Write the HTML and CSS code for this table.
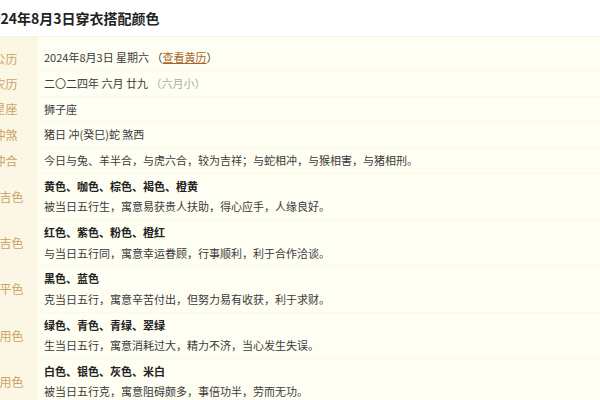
FILE: index.html
```html
<!DOCTYPE html>
<html lang="zh-CN">
<head>
  <meta charset="UTF-8">
  <title>2024年8月3日穿衣搭配颜色</title>
  <link rel="stylesheet" href="styles.css">
</head>
<body>
  <div class="page">

    <h1 class="title">2024年8月3日穿衣搭配颜色</h1>

    <div class="table">
      <div class="row">
        <div class="label">公历</div>
        <div class="value">2024年8月3日 星期六 （<a href="#">查看黄历</a>）</div>
      </div>
      <div class="row">
        <div class="label">农历</div>
        <div class="value">二〇二四年 六月 廿九 <span class="muted">（六月小）</span></div>
      </div>
      <div class="row">
        <div class="label">星座</div>
        <div class="value">狮子座</div>
      </div>
      <div class="row">
        <div class="label">冲煞</div>
        <div class="value">猪日 冲(癸巳)蛇 煞西</div>
      </div>
      <div class="row">
        <div class="label">冲合</div>
        <div class="value">今日与兔、羊半合，与虎六合，较为吉祥；与蛇相冲，与猴相害，与猪相刑。</div>
      </div>
      <div class="row">
        <div class="label">大吉色</div>
        <div class="value">
          <b>黄色、咖色、棕色、褐色、橙黄</b><br>
          被当日五行生，寓意易获贵人扶助，得心应手，人缘良好。
        </div>
      </div>
      <div class="row">
        <div class="label">次吉色</div>
        <div class="value">
          <b>红色、紫色、粉色、橙红</b><br>
          与当日五行同，寓意幸运眷顾，行事顺利，利于合作洽谈。
        </div>
      </div>
      <div class="row">
        <div class="label">较平色</div>
        <div class="value">
          <b>黑色、蓝色</b><br>
          克当日五行，寓意辛苦付出，但努力易有收获，利于求财。
        </div>
      </div>
      <div class="row">
        <div class="label">慎用色</div>
        <div class="value">
          <b>绿色、青色、青绿、翠绿</b><br>
          生当日五行，寓意消耗过大，精力不济，当心发生失误。
        </div>
      </div>
      <div class="row">
        <div class="label">忌用色</div>
        <div class="value">
          <b>白色、银色、灰色、米白</b><br>
          被当日五行克，寓意阻碍颇多，事倍功半，劳而无功。
        </div>
      </div>
    </div>

  </div>
</body>
</html>
```

FILE: styles.css
```css
body {
  margin: 0;
  background: #fffef3;
  font-family: "Noto Sans CJK SC", "Noto Sans", sans-serif;
  color: #3a3a3a;
  overflow: hidden;
}

.page {
  margin-left: -27px;
}

.title {
  margin: 0;
  padding-left: 11px;
  height: 37px;
  line-height: 36px;
  font-size: 14px;
  font-weight: bold;
  color: #222;
  background: #fff;
  border-bottom: 1px solid #f6f3e8;
  box-sizing: border-box;
}

.table {
  background: #fffef3;
}

.row {
  display: grid;
  grid-template-columns: 65px 1fr;
  border-bottom: 1px solid #fbf8ec;
}

.row:first-child .label,
.row:first-child .value {
  padding-top: 10px;
}

.label {
  display: flex;
  align-items: center;
  justify-content: center;
  background: #fcf7e4;
  color: #c9a468;
  font-size: 12px;
}

.value {
  padding: 2px 0 2.25px 6px;
  line-height: 20.5px;
  font-size: 11px;
}

.value b {
  color: #222;
}

.value a {
  color: #a9652b;
  text-decoration: underline;
}

.muted {
  color: #aaa;
}
```
